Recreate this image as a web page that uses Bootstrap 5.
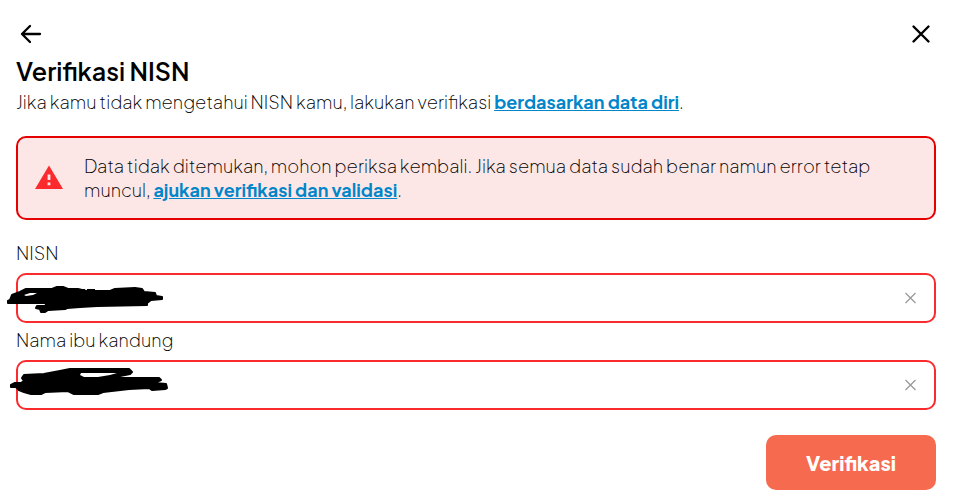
<!DOCTYPE html>
<html lang="id">
<head>
<meta charset="utf-8">
<meta name="viewport" content="width=device-width, initial-scale=1">
<title>Verifikasi NISN</title>
<link rel="stylesheet" href="https://cdn.jsdelivr.net/npm/bootstrap@5.3.0/dist/css/bootstrap.min.css">
<style>
body { font-family: "Plus Jakarta Sans", Inter, "Liberation Sans", sans-serif; font-size: 18px; font-weight: 200; line-height: 24px; color: #000; background: #fff; }
.page { padding: 20px 20px 12px 16px; }
.icon-btn { line-height: 0; color: #000; }
.page-title { font-size: 25px; line-height: 32px; font-weight: 600; color: #000; margin: 7px 0 3px; }
.text-link { color: #0086c9; font-weight: 700; }
.notice { padding: 16px; gap: 20px; margin: 22px 0 21px; border: 2px solid #e60000; border-radius: 10px; background: #fde6e6; }
.field { margin-bottom: 5px; }
.field-label { margin-bottom: 8px; }
.field-input { height: 50px; padding: 0 48px 0 16px; border: 2px solid #fa2a2d; border-radius: 10px; }
.clear-btn { right: 18px; color: #979797; }
.scribble { left: -10px; pointer-events: none; }
.submit-btn { margin-top: 20px; padding: 14px 40px; min-width: 169px; font-size: 20px; line-height: 27px; font-weight: 800; color: #fff; background: #f66a50; border-radius: 10px; }
.submit-btn:hover { color: #fff; background: #e95d43; }
</style>
</head>
<body>
<main class="page container-fluid">
  <header class="d-flex justify-content-between align-items-center">
    <button type="button" class="icon-btn btn border-0 p-0" aria-label="Kembali">
      <svg width="28" height="28" viewBox="0 0 28 28" fill="none" stroke="currentColor" stroke-width="2.3" stroke-linecap="round" stroke-linejoin="round"><path d="M24 14H6M14 6L6 14l8 8"/></svg>
    </button>
    <button type="button" class="icon-btn btn border-0 p-0" aria-label="Tutup">
      <svg width="30" height="28" viewBox="0 0 30 28" fill="none" stroke="currentColor" stroke-width="2.4" stroke-linecap="round"><path d="M7.5 6.5l15 15M22.5 6.5l-15 15"/></svg>
    </button>
  </header>
  <h1 class="page-title">Verifikasi NISN</h1>
  <p class="mb-0">Jika kamu tidak mengetahui NISN kamu, lakukan verifikasi <a class="text-link" href="#">berdasarkan data diri</a>.</p>

  <div class="notice d-flex align-items-center" role="alert">
    <svg class="flex-shrink-0" width="30" height="28" viewBox="0 0 30 28" aria-hidden="true"><path fill="#fa2a2d" d="M15 1.5L29 25H1z"/><path stroke="#fde6e6" stroke-width="2.8" d="M15 10.5v5.500M15 18.500v2.800"/></svg>
    <div>Data tidak ditemukan, mohon periksa kembali. Jika semua data sudah benar namun error tetap muncul, <a class="text-link" href="#">ajukan verifikasi dan validasi</a>.</div>
  </div>

  <form>
    <div class="field">
      <label class="field-label d-block" for="nisn">NISN</label>
      <div class="position-relative d-flex align-items-center">
        <input class="field-input form-control" id="nisn" type="text">
        <svg class="scribble position-absolute" width="160" height="38" viewBox="0 -8 160 38" aria-hidden="true"><path d="M4 13L6 8 14 5 20 2 46 2 51 0 57 0 62 2 72 2 80 4 104 4 109 2 129 1 136 2 138 5 149 6 150 9 156 10 156 12 145 13 141 16 141 18 91 19 74 20 61 21 59 22 42 23 39 25 35 25 34 22 30 21 31 19 39 19 41 16 2 16 2 14z" stroke="#000" stroke-width="2" stroke-linejoin="round"/><path d="M18 8L24 6 31 6 27 8 20 9z" fill="#fff"/><path d="M72 2.500h7M81 2.500h8" stroke="#000"/></svg>
        <button type="button" class="clear-btn icon-btn btn border-0 p-0 position-absolute" aria-label="Hapus NISN"><svg width="16" height="16" viewBox="0 0 16 16" stroke="currentColor" stroke-width="1.2"><path d="M3.5 3l10 10M13.5 3l-10 10"/></svg></button>
      </div>
    </div>
    <div class="field">
      <label class="field-label d-block" for="ibu">Nama ibu kandung</label>
      <div class="position-relative d-flex align-items-center">
        <input class="field-input form-control" id="ibu" type="text">
        <svg class="scribble position-absolute" width="165" height="40" viewBox="0 0 165 40" aria-hidden="true"><path d="M5 20L9 18 15 18 18 16 16 13 18 10 38 9 54 6 64 4 123 4 126 7 124 9 114 11 115 13 153 13 155 15 148 18 160 19 161 23 159 24 146 25 143 23 123 24 97 27 92 29 68 29 62 26 39 27 35 29 25 29 18 27 13 25 10 22 5 22z" stroke="#000" stroke-width="2" stroke-linejoin="round"/><path d="M75 8L111 8 104 10 92 12 78 12 74 10z" fill="#fff"/></svg>
        <button type="button" class="clear-btn icon-btn btn border-0 p-0 position-absolute" aria-label="Hapus nama ibu kandung"><svg width="16" height="16" viewBox="0 0 16 16" stroke="currentColor" stroke-width="1.2"><path d="M3.5 3l10 10M13.5 3l-10 10"/></svg></button>
      </div>
    </div>
    <div class="d-flex justify-content-end">
      <button type="button" class="submit-btn btn border-0">Verifikasi</button>
    </div>
  </form>
</main>
<script src="https://cdn.jsdelivr.net/npm/bootstrap@5.3.0/dist/js/bootstrap.bundle.min.js"></script>
</body>
</html>
